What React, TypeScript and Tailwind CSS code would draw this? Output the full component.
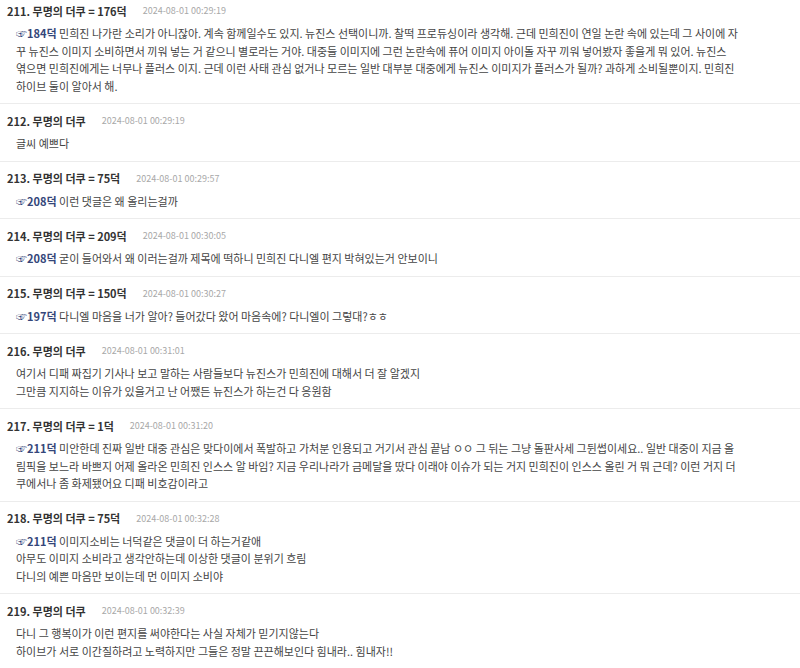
import React from "react";

interface Comment {
  no: number;
  reply?: number;
  ref?: string;
  time: string;
  lines: string[];
}

const comments: Comment[] = [
  {
    no: 211,
    reply: 176,
    ref: "184덕",
    time: "2024-08-01 00:29:19",
    lines: [
      " 민희진 나가란 소리가 아니잖아. 계속 함께일수도 있지. 뉴진스 선택이니까. 찰떡 프로듀싱이라 생각해. 근데 민희진이 연일 논란 속에 있는데 그 사이에 자",
      "꾸 뉴진스 이미지 소비하면서 끼워 넣는 거 같으니 별로라는 거야. 대중들 이미지에 그런 논란속에 퓨어 이미지 아이돌 자꾸 끼워 넣어봤자 좋을게 뭐 있어. 뉴진스",
      "엮으면 민희진에게는 너무나 플러스 이지. 근데 이런 사태 관심 없거나 모르는 일반 대부분 대중에게 뉴진스 이미지가 플러스가 될까? 과하게 소비될뿐이지. 민희진",
      "하이브 둘이 알아서 해.",
    ],
  },
  { no: 212, time: "2024-08-01 00:29:19", lines: ["글씨 예쁘다"] },
  { no: 213, reply: 75, ref: "208덕", time: "2024-08-01 00:29:57", lines: [" 이런 댓글은 왜 올리는걸까"] },
  {
    no: 214,
    reply: 209,
    ref: "208덕",
    time: "2024-08-01 00:30:05",
    lines: [" 굳이 들어와서 왜 이러는걸까 제목에 떡하니 민희진 다니엘 편지 박혀있는거 안보이니"],
  },
  {
    no: 215,
    reply: 150,
    ref: "197덕",
    time: "2024-08-01 00:30:27",
    lines: [" 다니엘 마음을 너가 알아? 들어갔다 왔어 마음속에? 다니엘이 그렇대?ㅎㅎ"],
  },
  {
    no: 216,
    time: "2024-08-01 00:31:01",
    lines: [
      "여기서 디패 짜집기 기사나 보고 말하는 사람들보다 뉴진스가 민희진에 대해서 더 잘 알겠지",
      "그만큼 지지하는 이유가 있을거고 난 어쨌든 뉴진스가 하는건 다 응원함",
    ],
  },
  {
    no: 217,
    reply: 1,
    ref: "211덕",
    time: "2024-08-01 00:31:20",
    lines: [
      " 미안한데 진짜 일반 대중 관심은 맞다이에서 폭발하고 가처분 인용되고 거기서 관심 끝남 ㅇㅇ 그 뒤는 그냥 돌판사세 그뒨썹이세요.. 일반 대중이 지금 올",
      "림픽을 보느라 바쁘지 어제 올라온 민희진 인스스 알 바임? 지금 우리나라가 금메달을 땄다 이래야 이슈가 되는 거지 민희진이 인스스 올린 거 뭐 근데? 이런 거지 더",
      "쿠에서나 좀 화제됐어요 디패 비호감이라고",
    ],
  },
  {
    no: 218,
    reply: 75,
    ref: "211덕",
    time: "2024-08-01 00:32:28",
    lines: [
      " 이미지소비는 너덕같은 댓글이 더 하는거같애",
      "아무도 이미지 소비라고 생각안하는데 이상한 댓글이 분위기 흐림",
      "다니의 예쁜 마음만 보이는데 먼 이미지 소비야",
    ],
  },
  {
    no: 219,
    time: "2024-08-01 00:32:39",
    lines: [
      "다니 그 행복이가 이런 편지를 써야한다는 사실 자체가 믿기지않는다",
      "하이브가 서로 이간질하려고 노력하지만 그들은 정말 끈끈해보인다 힘내라.. 힘내자!!",
    ],
  },
];

const font = { fontFamily: '"Noto Sans CJK KR", "Noto Sans", sans-serif' };

const CommentRow: React.FC<{ c: Comment; first: boolean }> = ({ c, first }) => (
  <div className={`border-b border-[#ececec] pl-[7px] pr-2 pb-[8px] ${first ? "pt-[2px]" : "pt-[8px]"}`}>
    <div className="flex items-center h-[18px] whitespace-nowrap">
      <span className="text-[11px] font-bold text-[#333]">
        {c.no}. 무명의 더쿠{c.reply !== undefined && ` = ${c.reply}덕`}
      </span>
      <span className="ml-[16px] text-[9px] text-[#a8a8a8]">{c.time}</span>
    </div>
    <div className="mt-[5px] pl-[9px] text-[11px] leading-[17.5px] text-[#444]">
      {c.lines.map((line, i) => (
        <div key={i} className="whitespace-nowrap">
          {i === 0 && c.ref && (
            <span className="font-bold text-[#34467a]">☞{c.ref}</span>
          )}
          {line}
        </div>
      ))}
    </div>
  </div>
);

export default function App() {
  return (
    <div className="w-[800px] h-[668px] overflow-hidden bg-white" style={font}>
      {comments.map((c, i) => (
        <CommentRow key={c.no} c={c} first={i === 0} />
      ))}
    </div>
  );
}
